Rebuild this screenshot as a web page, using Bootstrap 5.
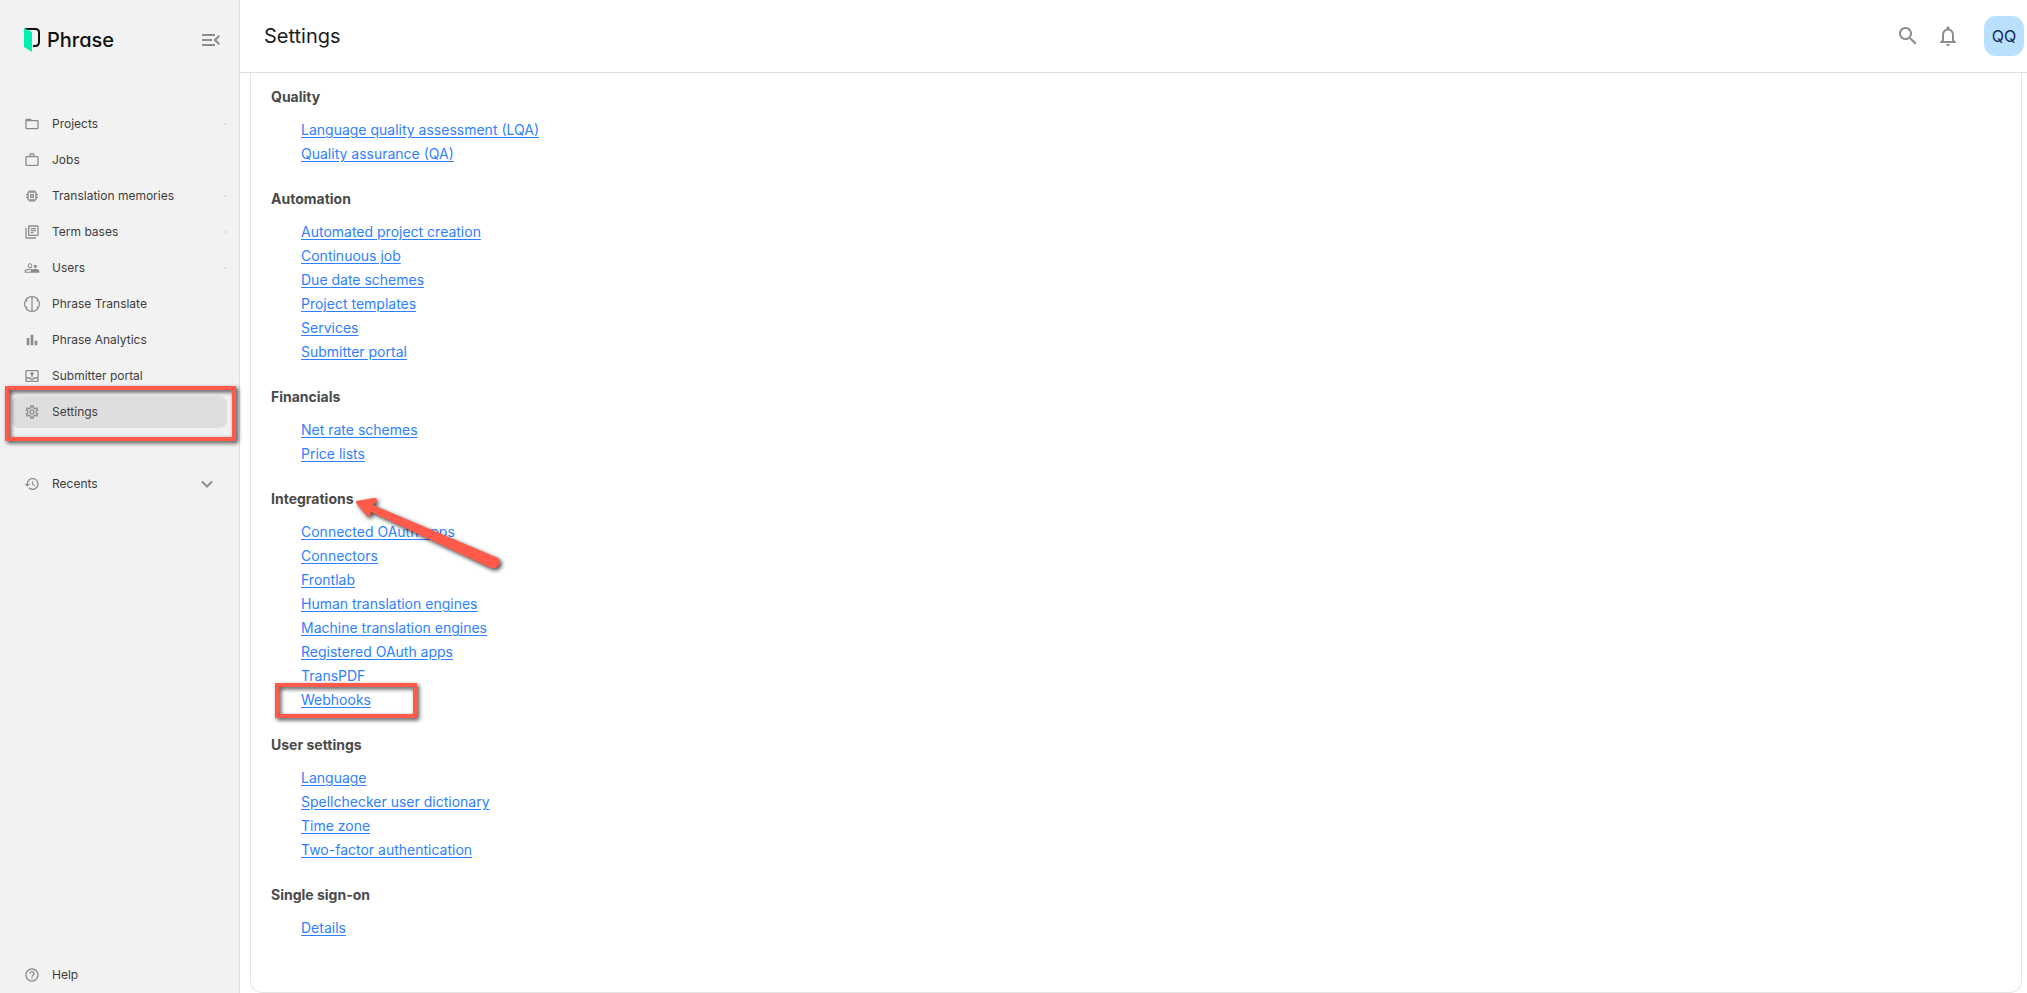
<!DOCTYPE html>
<html lang="en">
<head>
<meta charset="utf-8">
<meta name="viewport" content="width=device-width, initial-scale=1">
<title>Settings - Phrase</title>
<link href="https://cdn.jsdelivr.net/npm/bootstrap@5.3.0/dist/css/bootstrap.min.css" rel="stylesheet">
<style>
  body { font-family: Inter, "Liberation Sans", sans-serif; font-optical-sizing: none; color: #1c1c1c; background: #fff; }
  .side { width: 240px; background: #f2f2f2; border-right: 1px solid #dedede; padding: 0 12px 2px; }
  .side-top { height: 80px; padding: 0 4px 0 12px; margin-bottom: 28px; }
  .logo { color: #111; font-size: 20px; font-weight: 500; line-height: 24px; gap: 7px; font-feature-settings: "cv11"; }
  .icon-btn { border: 0; background: none; padding: 0; color: #8c8c8c; line-height: 0; }
  .side-list { gap: 4px; }
  .side-link { height: 32px; padding: 0 12px; gap: 12px; border: 0; border-radius: 8px; background: none; color: #3d3d3d; font-size: 12px; line-height: 16px; text-align: left; }
  .side-link svg { color: #8c8c8c; flex: none; }
  .side-link.active { background: #dedede; }
  .side-link.more::after { content: ""; width: 1px; height: 2px; margin-left: auto; margin-right: -11px; background: #c4c4c4; }
  .recents { margin-top: 36px; }
  .top { height: 73px; border-bottom: 1px solid #dedede; padding: 0 3px 0 24px; flex: none; }
  .top h1 { font-size: 20px; line-height: 28px; font-weight: 400; }
  .avatar { width: 40px; height: 40px; border: 0; border-radius: 12px; background: #b9e1ff; color: #14285a; font-size: 16px; padding: 0; margin-left: 24px; }
  .panel { margin: 0 5px 0 10px; border: 1px solid #e4e4e4; border-top: 0; border-radius: 0 0 12px 12px; padding: 12px 20px 52px; }
  .group + .group { margin-top: 21px; }
  .group h2 { font-size: 14px; line-height: 24px; font-weight: 700; color: #4a4a4a; margin: 0 0 9px; }
  .group ul { padding-left: 30px; font-size: 14px; line-height: 24px; }
  .group a { color: #2f80ff; text-underline-offset: 2px; }
  .callout-box { position: absolute; pointer-events: none; border: 4px solid #ff5a4a; filter: drop-shadow(2px 2px 2px rgba(0,0,0,.75)); }
  .box-settings { left: -7px; right: -9px; top: -10px; height: 55px; }
  .box-webhooks { left: -26px; top: -5px; width: 142px; height: 35px; }
  .callout-arrow { position: absolute; left: 80px; top: 4px; pointer-events: none; filter: drop-shadow(2px 2px 2px rgba(0,0,0,.75)); }
</style>
</head>
<body>
<div class="d-flex vh-100">
  <aside class="side d-flex flex-column flex-shrink-0">
    <div class="side-top d-flex align-items-center justify-content-between">
      <a href="#" class="logo d-flex align-items-center text-decoration-none">
        <svg width="16" height="24" viewBox="0 0 16 24"><path d="M1 1h10.500Q15 1 15 4.500v9.500Q15 18 11 18H9" fill="none" stroke="#111" stroke-width="2"/><path d="M0 0l8 4v20l-8-5z" fill="#00f0b0"/></svg>
        <span>Phrase</span>
      </a>
      <button class="icon-btn" aria-label="Collapse menu"><svg width="24" height="24" viewBox="0 0 24 24" fill="currentColor"><path d="M3 18h13v-2H3v2zm0-5h10v-2H3v2zm0-7v2h13V6H3zm18 9.590L17.420 12 21 8.410 19.590 7l-5 5 5 5L21 15.590z"/></svg></button>
    </div>
    <nav class="side-list d-flex flex-column flex-grow-1">
      <a href="#" class="side-link more d-flex align-items-center text-decoration-none"><svg width="16" height="16" viewBox="0 0 24 24" fill="currentColor"><path d="M20 6h-8l-2-2H4c-1.100 0-2 .9-2 2v12c0 1.100.9 2 2 2h16c1.100 0 2-.9 2-2V8c0-1.100-.9-2-2-2zm0 12H4V8h16v10z"/></svg>Projects</a>
      <a href="#" class="side-link d-flex align-items-center text-decoration-none"><svg width="16" height="16" viewBox="0 0 24 24" fill="currentColor"><path d="M14 6V4h-4v2h4zM4 8v11h16V8H4zm16-2c1.110 0 2 .89 2 2v11c0 1.110-.89 2-2 2H4c-1.110 0-2-.89-2-2V8c0-1.110.89-2 2-2h4V4c0-1.110.89-2 2-2h4c1.110 0 2 .89 2 2v2h4z"/></svg>Jobs</a>
      <a href="#" class="side-link more d-flex align-items-center text-decoration-none"><svg width="16" height="16" viewBox="0 0 24 24" fill="currentColor"><path d="M15 9H9v6h6V9zm-2 4h-2v-2h2v2zm8-2V9h-2V7c0-1.100-.9-2-2-2h-2V3h-2v2h-2V3H9v2H7c-1.100 0-2 .9-2 2v2H3v2h2v2H3v2h2v2c0 1.100.9 2 2 2h2v2h2v-2h2v2h2v-2h2c1.100 0 2-.9 2-2v-2h2v-2h-2v-2h2zm-4 6H7V7h10v10z"/></svg>Translation memories</a>
      <a href="#" class="side-link more d-flex align-items-center text-decoration-none"><svg width="16" height="16" viewBox="0 0 24 24" fill="currentColor"><path d="M4 6H2v14c0 1.100.9 2 2 2h14v-2H4V6zm16-4H8c-1.100 0-2 .9-2 2v12c0 1.100.9 2 2 2h12c1.100 0 2-.9 2-2V4c0-1.100-.9-2-2-2zm0 14H8V4h12v12zM10 9h8v2h-8zm0 3h4v2h-4zm0-6h8v2h-8z"/></svg>Term bases</a>
      <a href="#" class="side-link more d-flex align-items-center text-decoration-none"><svg width="16" height="16" viewBox="0 0 24 24" fill="currentColor"><path d="M16.500 13c-1.200 0-3.070.34-4.500 1-1.430-.67-3.300-1-4.500-1C5.330 13 1 14.080 1 16.250V19h22v-2.750c0-2.170-4.330-3.250-6.500-3.250zM10 17.500H3v-1c0-.8 2.500-2 4.500-2 .9 0 2.200.3 3.200.7-.5.500-.7 1-.7 1.500zM9 12c1.930 0 3.500-1.570 3.500-3.500S10.930 5 9 5 5.500 6.570 5.500 8.500 7.070 12 9 12zm0-5.500c1.100 0 2 .9 2 2s-.9 2-2 2-2-.9-2-2 .9-2 2-2zM17 12c1.380 0 2.500-1.120 2.500-2.500S18.380 7 17 7s-2.500 1.120-2.500 2.500S15.620 12 17 12z"/></svg>Users</a>
      <a href="#" class="side-link d-flex align-items-center text-decoration-none"><svg width="16" height="16" viewBox="0 0 16 16" fill="none" stroke="currentColor" stroke-width="1.300"><path d="M8 .8v14.400M8 .9Q5.500.2 4.300 2 2 2.200 2 4.400.4 5.800.8 8q-.4 2.200 1.200 3.600 0 2.200 2.300 2.400 1.200 1.800 3.700 1.100 2.500.7 3.700-1.100 2.300-.2 2.300-2.400 1.600-1.400 1.200-3.600.4-2.200-1.200-3.600 0-2.200-2.300-2.400Q10.500.2 8 .9z"/><path d="M2 4.400l1.500.6M14 4.400l-1.500.6M2 11.600l1.500-.6M14 11.600l-1.500-.6" stroke-width="1"/></svg>Phrase Translate</a>
      <a href="#" class="side-link d-flex align-items-center text-decoration-none"><svg width="16" height="16" viewBox="0 0 24 24" fill="currentColor"><path d="M4 9h4v11H4zM16 13h4v7h-4zM10 4h4v16h-4z"/></svg>Phrase Analytics</a>
      <a href="#" class="side-link d-flex align-items-center text-decoration-none"><svg width="16" height="16" viewBox="0 0 24 24" fill="currentColor"><path d="M20 3H4C2.900 3 2 3.900 2 5v14c0 1.100.9 2 2 2h16c1.100 0 2-.9 2-2V5c0-1.100-.9-2-2-2zm0 16H4v-3h4.600c.7 1.200 2 2 3.400 2s2.700-.8 3.400-2H20v3zm0-5h-6c0 1.100-.9 2-2 2s-2-.9-2-2H4V5h16v9zM8 9.500h2.700V13h2.600V9.500H16l-4-4z"/></svg>Submitter portal</a>
      <div class="position-relative">
        <a href="#" class="side-link active d-flex align-items-center text-decoration-none" aria-current="page"><svg width="16" height="16" viewBox="0 0 24 24" fill="currentColor"><path d="M19.430 12.980c.04-.32.07-.64.07-.98 0-.34-.03-.66-.07-.98l2.110-1.650c.19-.15.24-.42.12-.64l-2-3.460c-.09-.16-.26-.25-.44-.25-.06 0-.12.010-.17.030l-2.490 1c-.52-.4-1.080-.73-1.690-.98l-.38-2.650C14.460 2.180 14.250 2 14 2h-4c-.25 0-.46.18-.49.42l-.38 2.650c-.61.25-1.170.59-1.690.98l-2.490-1c-.06-.02-.12-.03-.18-.03-.17 0-.34.09-.43.25l-2 3.460c-.13.22-.07.49.12.64l2.110 1.650c-.04.32-.07.65-.07.98 0 .33.030.66.070.98l-2.110 1.650c-.19.15-.24.42-.12.64l2 3.460c.09.16.26.25.44.25.06 0 .12-.01.17-.03l2.490-1c.52.4 1.080.73 1.690.98l.38 2.650c.03.24.24.42.49.42h4c.25 0 .46-.18.49-.42l.38-2.650c.61-.25 1.170-.59 1.690-.98l2.490 1c.06.02.12.030.18.030.17 0 .34-.09.43-.25l2-3.460c.12-.22.07-.49-.12-.64l-2.110-1.650zm-1.980-1.710c.04.31.05.52.05.73 0 .21-.02.43-.05.73l-.14 1.130.89.7 1.080.84-.7 1.210-1.270-.51-1.040-.42-.9.68c-.43.32-.84.56-1.250.73l-1.060.43-.16 1.130-.2 1.350h-1.400l-.19-1.350-.16-1.130-1.060-.43c-.43-.18-.83-.41-1.230-.71l-.91-.7-1.060.43-1.270.51-.7-1.210 1.080-.84.89-.7-.14-1.130c-.03-.31-.05-.54-.05-.74s.02-.43.05-.73l.14-1.130-.89-.7-1.080-.84.7-1.210 1.270.51 1.040.42.9-.68c.43-.32.84-.56 1.250-.73l1.060-.43.16-1.130.2-1.350h1.390l.19 1.350.16 1.130 1.060.43c.43.18.83.41 1.230.71l.91.7 1.060-.43 1.270-.51.7 1.210-1.070.85-.89.7.14 1.130zM12 8c-2.210 0-4 1.790-4 4s1.790 4 4 4 4-1.790 4-4-1.790-4-4-4zm0 6c-1.100 0-2-.9-2-2s.9-2 2-2 2 .9 2 2-.9 2-2 2z"/></svg>Settings</a>
        <span class="callout-box box-settings"></span>
      </div>
      <button class="side-link recents d-flex align-items-center"><svg width="16" height="16" viewBox="0 0 24 24" fill="currentColor"><path d="M13 3c-4.970 0-9 4.030-9 9H1l3.890 3.890.07.14L9 12H6c0-3.870 3.130-7 7-7s7 3.130 7 7-3.130 7-7 7c-1.930 0-3.680-.79-4.940-2.060l-1.420 1.420C8.270 19.990 10.510 21 13 21c4.970 0 9-4.030 9-9s-4.030-9-9-9zm-1 5v5l4.280 2.540.72-1.210-3.500-2.080V8H12z"/></svg><span class="flex-grow-1">Recents</span><svg width="16" height="16" viewBox="0 0 16 16" fill="none" stroke="currentColor" stroke-width="2"><path d="M3 5.500l5 5 5-5"/></svg></button>
      <a href="#" class="side-link d-flex align-items-center text-decoration-none mt-auto"><svg width="16" height="16" viewBox="0 0 24 24" fill="currentColor"><path d="M11 18h2v-2h-2v2zm1-16C6.480 2 2 6.480 2 12s4.480 10 10 10 10-4.480 10-10S17.520 2 12 2zm0 18c-4.410 0-8-3.590-8-8s3.590-8 8-8 8 3.590 8 8-3.590 8-8 8zm0-14c-2.210 0-4 1.790-4 4h2c0-1.100.9-2 2-2s2 .9 2 2c0 2-3 1.750-3 5h2c0-2.250 3-2.500 3-5 0-2.210-1.790-4-4-4z"/></svg>Help</a>
    </nav>
  </aside>
  <div class="d-flex flex-column flex-grow-1">
    <header class="top d-flex align-items-center">
      <h1 class="m-0 me-auto">Settings</h1>
      <div class="d-flex align-items-center gap-3">
        <button class="icon-btn" aria-label="Search"><svg width="24" height="24" viewBox="0 0 24 24" fill="currentColor"><path d="M15.500 14h-.79l-.28-.27C15.410 12.590 16 11.110 16 9.500 16 5.910 13.090 3 9.500 3S3 5.910 3 9.500 5.910 16 9.500 16c1.610 0 3.090-.59 4.230-1.570l.27.28v.79l5 4.990L20.490 19l-4.990-5zm-6 0C7.010 14 5 11.990 5 9.500S7.010 5 9.500 5 14 7.010 14 9.500 11.990 14 9.500 14z"/></svg></button>
        <button class="icon-btn" aria-label="Notifications"><svg width="24" height="24" viewBox="0 0 24 24" fill="currentColor"><path d="M12 22c1.100 0 2-.9 2-2h-4c0 1.100.9 2 2 2zm6-6v-5c0-3.070-1.630-5.640-4.500-6.320V4c0-.83-.67-1.500-1.500-1.500s-1.500.67-1.500 1.500v.68C7.640 5.360 6 7.920 6 11v5l-2 2v1h16v-1l-2-2zm-2 1H8v-6c0-2.480 1.510-4.500 4-4.500s4 2.020 4 4.500v6z"/></svg></button>
      </div>
      <button class="avatar">QQ</button>
    </header>
    <main class="flex-grow-1">
      <div class="panel">
        <section class="group"><h2>Quality</h2><ul class="list-unstyled m-0">
          <li><a href="#">Language quality assessment (LQA)</a></li>
          <li><a href="#">Quality assurance (QA)</a></li></ul></section>
        <section class="group"><h2>Automation</h2><ul class="list-unstyled m-0">
          <li><a href="#">Automated project creation</a></li>
          <li><a href="#">Continuous job</a></li>
          <li><a href="#">Due date schemes</a></li>
          <li><a href="#">Project templates</a></li>
          <li><a href="#">Services</a></li>
          <li><a href="#">Submitter portal</a></li></ul></section>
        <section class="group"><h2>Financials</h2><ul class="list-unstyled m-0">
          <li><a href="#">Net rate schemes</a></li>
          <li><a href="#">Price lists</a></li></ul></section>
        <section class="group position-relative"><h2>Integrations</h2><ul class="list-unstyled m-0">
          <li><a href="#">Connected OAuth apps</a></li>
          <li><a href="#">Connectors</a></li>
          <li><a href="#">Frontlab</a></li>
          <li><a href="#">Human translation engines</a></li>
          <li><a href="#">Machine translation engines</a></li>
          <li><a href="#">Registered OAuth apps</a></li>
          <li><a href="#">TransPDF</a></li>
          <li class="position-relative"><a href="#">Webhooks</a><span class="callout-box box-webhooks"></span></li></ul>
          <svg class="callout-arrow" width="156" height="80" viewBox="0 0 156 80"><path d="M5 10L23 7Q28 7 25 11L22 14L147 67Q150 70 148 74Q145 78 140 77L20 21L19 25Q17 27 15 24L5 12z" fill="#ff5a4a"/></svg>
        </section>
        <section class="group"><h2>User settings</h2><ul class="list-unstyled m-0">
          <li><a href="#">Language</a></li>
          <li><a href="#">Spellchecker user dictionary</a></li>
          <li><a href="#">Time zone</a></li>
          <li><a href="#">Two-factor authentication</a></li></ul></section>
        <section class="group"><h2>Single sign-on</h2><ul class="list-unstyled m-0">
          <li><a href="#">Details</a></li></ul></section>
      </div>
    </main>
  </div>
</div>
<script src="https://cdn.jsdelivr.net/npm/bootstrap@5.3.0/dist/js/bootstrap.bundle.min.js"></script>
</body>
</html>
